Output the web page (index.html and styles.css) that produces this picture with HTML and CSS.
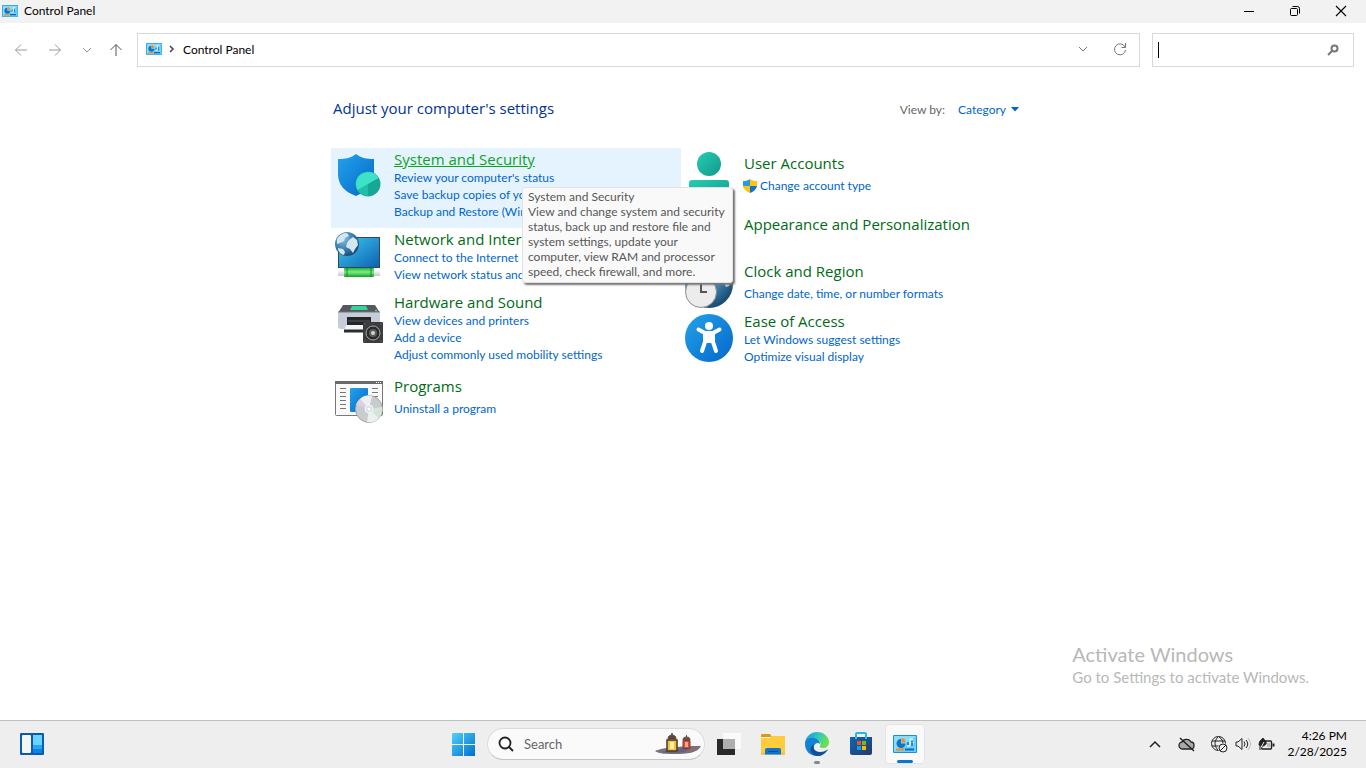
FILE: index.html
```
<!DOCTYPE html>
<html lang="en">
<head>
  <meta charset="UTF-8">
  <title>Control Panel</title>
  <link rel="stylesheet" href="styles.css">
</head>
<body>
  <svg class="defs" aria-hidden="true">
    <defs>
      <linearGradient id="blue" x1="0" y1="0" x2="1" y2="1">
        <stop offset="0" stop-color="#23a3e8"/><stop offset="1" stop-color="#0467cc"/>
      </linearGradient>
      <linearGradient id="teal" x1="0" y1="0" x2="1" y2="1">
        <stop offset="0" stop-color="#27cdb4"/><stop offset="1" stop-color="#11998a"/>
      </linearGradient>
      <linearGradient id="screen" x1="0" y1="0" x2="1" y2="1">
        <stop offset="0" stop-color="#40c8ef"/><stop offset="1" stop-color="#0b63b4"/>
      </linearGradient>
      <linearGradient id="cable" x1="0" y1="0" x2="0" y2="1">
        <stop offset="0" stop-color="#20b03a"/><stop offset="0.45" stop-color="#7dee7f"/><stop offset="1" stop-color="#149c30"/>
      </linearGradient>
      <linearGradient id="white" x1="0" y1="0" x2="0" y2="1">
        <stop offset="0" stop-color="#ffffff"/><stop offset="1" stop-color="#c4c8cc"/>
      </linearGradient>
      <radialGradient id="globe" cx="0.35" cy="0.3" r="0.8">
        <stop offset="0" stop-color="#8dbcdc"/><stop offset="0.5" stop-color="#3c83b3"/><stop offset="1" stop-color="#123f61"/>
      </radialGradient>
      <linearGradient id="win" x1="0" y1="0" x2="1" y2="1">
        <stop offset="0" stop-color="#4fd0fb"/><stop offset="1" stop-color="#0070ce"/>
      </linearGradient>
      <linearGradient id="edge-top" x1="0" y1="0" x2="1" y2="0.4">
        <stop offset="0.2" stop-color="#1fa5df"/><stop offset="0.6" stop-color="#35cbb6"/><stop offset="1" stop-color="#6be04c"/>
      </linearGradient>
      <linearGradient id="bag" x1="0" y1="0" x2="1" y2="1">
        <stop offset="0" stop-color="#0f66b5"/><stop offset="1" stop-color="#243a66"/>
      </linearGradient>
    </defs>
    <symbol id="cpanel" viewBox="0 0 24 18">
      <rect width="24" height="18" rx="1" fill="#1b8fdc"/>
      <rect x="1" y="1" width="22" height="16" fill="#8adcfb"/>
      <path d="M1 17 23 1v16z" fill="#6ccff8"/>
      <path d="M8 4a4.500 4.500 0 1 0 4.500 4.500H8z" fill="#1274c4"/>
      <path d="M8.500 3A4.500 4.500 0 0 1 12.500 7.500h-4z" fill="#f78d1e"/>
      <path d="M14 11h3V4h3M17 7.500h4" fill="none" stroke="#fff"/>
      <path d="M15 7v3M19 6v5" stroke="#1274c4" stroke-width="1.500"/>
      <path d="M3 14.500h8" stroke="#f78d1e" stroke-width="2"/>
      <path d="M12 14.500h9" stroke="#0d69b8" stroke-width="2"/>
    </symbol>
  </svg>

  <header class="titlebar">
    <svg class="cp-small" viewBox="0 0 24 18"><use href="#cpanel"/></svg>
    <span class="window-title">Control Panel</span>
    <div class="window-buttons">
      <button aria-label="Minimize"><svg width="12" height="12"><path d="M1 6.500h10" stroke="#000"/></svg></button>
      <button aria-label="Restore"><svg width="12" height="12" fill="none" stroke="#000"><rect x="1.500" y="3.500" width="7" height="7" rx="1"/><path d="M3.500 1.500h5a2 2 0 0 1 2 2v5"/></svg></button>
      <button aria-label="Close"><svg width="12" height="12"><path d="M1 1l10 10M11 1 1 11" stroke="#000" stroke-width="1.100"/></svg></button>
    </div>
  </header>

  <div class="navbar">
    <div class="nav-buttons">
      <button aria-label="Back"><svg width="14" height="14"><path d="M13 7H1.500M7 1.500 1.500 7 7 12.500"/></svg></button>
      <button aria-label="Forward"><svg width="14" height="14"><path d="M1 7h11.500M7 1.500 12.500 7 7 12.500"/></svg></button>
      <button class="recent" aria-label="Recent locations"><svg width="10" height="10"><path d="M1 3l4 4 4-4"/></svg></button>
      <button class="up" aria-label="Up"><svg width="14" height="14"><path d="M7 13V1.500M1.500 7 7 1.500 12.500 7"/></svg></button>
    </div>
    <nav class="address">
      <svg class="cp-small" viewBox="0 0 24 18"><use href="#cpanel"/></svg>
      <svg class="crumb" width="6" height="8"><path d="M1 1l3 3-3 3" fill="none" stroke="#444" stroke-width="1.500"/></svg>
      <a href="#">Control Panel</a>
      <button class="history" aria-label="Previous locations"><svg width="10" height="10"><path d="M1 3l4 4 4-4"/></svg></button>
      <button aria-label="Refresh"><svg width="14" height="14"><path d="M12 5A5.500 5.500 0 1 0 12.500 8M12.500 1v4.500H8.500"/></svg></button>
    </nav>
    <form class="search">
      <span class="caret"></span>
      <input type="text" aria-label="Search Control Panel">
      <svg width="12" height="12" fill="none" stroke="#777"><circle cx="7.500" cy="4.500" r="3" stroke-width="2"/><path d="M5 7 1 11" stroke-width="2"/></svg>
    </form>
  </div>

  <main>
    <div class="panel">
      <div class="panel-head">
        <h1>Adjust your computer's settings</h1>
        <label for="view">View by:</label>
        <select id="view"><option>Category</option></select>
        <svg width="8" height="5"><path d="M0 0h8L4 4.500z" fill="#0066cc"/></svg>
      </div>

      <div class="columns">
        <div class="column">
          <section class="category hover">
            <svg class="icon" viewBox="0 0 48 48">
              <path d="M21 2c5 4 10 5 18 5v15c0 11-8 18-18 22C10 40 3 33 3 22V7c8 0 13-1 18-5z" fill="url(#blue)"/>
              <circle cx="33" cy="32" r="12.500" fill="#16a796"/>
              <path d="M33 32V44A12 12 0 0 1 22.500 38z" fill="#1fbfa9"/>
              <path d="M33 32 22.500 38A12 12 0 1 1 43.500 26z" fill="#3ee2c8"/>
            </svg>
            <div class="links">
              <h2><a href="#">System and Security</a></h2>
              <a href="#">Review your computer's status</a>
              <a href="#">Save backup copies of your files with File History</a>
              <a href="#">Backup and Restore (Windows 7)</a>
            </div>
            <div class="tooltip" role="tooltip">System and Security<br>View and change system and security<br>status, back up and restore file and<br>system settings, update your<br>computer, view RAM and processor<br>speed, check firewall, and more.</div>
          </section>

          <section class="category">
            <svg class="icon" viewBox="0 0 48 48">
              <rect x="3" y="5" width="42" height="31" fill="#30495a"/>
              <rect x="4" y="6" width="40" height="29" fill="url(#screen)"/>
              <rect x="3" y="38" width="42" height="6" fill="url(#white)"/>
              <rect x="9" y="36" width="30" height="9" rx="1" fill="url(#cable)"/>
              <path d="M12 36v9M36 36v9" stroke="#138d2c"/>
              <circle cx="12" cy="12" r="12" fill="url(#globe)"/>
              <path d="M2 7C5 2 9 1 12 1l2 3-4 2-1 3-4 2-3 1zM14 8l4-3 4 3 1 5-3 4-2 4-3-4-4-2 1-4zM3 16l5 1 2 3-1 3c-4-1-6-4-6-7z" fill="#d4e6ee"/>
            </svg>
            <div class="links">
              <h2><a href="#">Network and Internet</a></h2>
              <a href="#">Connect to the Internet</a>
              <a href="#">View network status and tasks</a>
            </div>
          </section>

          <section class="category">
            <svg class="icon" viewBox="0 0 48 48">
              <path d="M8 10h32l5 8H3z" fill="#55595d"/>
              <path d="M17 11h14l2 4H15z" fill="#31d39e"/>
              <path d="M3 17h42v14a3 3 0 0 1-3 3H6a3 3 0 0 1-3-3z" fill="#c6cdd8"/>
              <path d="M3 17h42" stroke="#747980"/>
              <rect x="12" y="22" width="24" height="8" fill="#24272a"/>
              <path d="M13 26h22" stroke="#54585c"/>
              <path d="M11 30h26v6H9z" fill="#f4f5f6"/>
              <path d="M9 36h20" stroke="#2b2d2f" stroke-width="3"/>
              <circle cx="41" cy="15.500" r="1" fill="#45ed45"/>
              <rect x="28" y="27" width="20" height="21" rx="1" fill="#3b3c3e"/>
              <circle cx="38" cy="38" r="7" fill="#292a2b" stroke="#a5a7a9"/>
              <circle cx="38" cy="38" r="4" fill="#5c5e60"/>
              <circle cx="38" cy="38" r="2" fill="#d1d3d5"/>
              <g fill="#97999b"><circle cx="30" cy="29" r="0.500"/><circle cx="46" cy="29" r="0.500"/><circle cx="30" cy="46" r="0.500"/><circle cx="46" cy="46" r="0.500"/></g>
            </svg>
            <div class="links">
              <h2><a href="#">Hardware and Sound</a></h2>
              <a href="#">View devices and printers</a>
              <a href="#">Add a device</a>
              <a href="#">Adjust commonly used mobility settings</a>
            </div>
          </section>

          <section class="category single">
            <svg class="icon" viewBox="0 0 48 48">
              <rect x="0.500" y="6.500" width="47" height="34" rx="1" fill="#fafafa" stroke="#777"/>
              <path d="M0 7.500h48" stroke="#6a6a6a" stroke-width="3"/>
              <path d="M41 7.500h1m1 0h1m1 0h1" stroke="#fff"/>
              <path d="M5 13.500h6M5 17.500h6M5 21.500h6M5 25.500h6M5 29.500h6M5 33.500h6M37 13.500h6M37 17.500h6M37 21.500h6" stroke="#777"/>
              <rect x="15" y="13" width="18" height="24" rx="1" fill="url(#blue)"/>
              <circle cx="34" cy="34" r="13.500" fill="#c9cccf" stroke="#a3a5a8"/>
              <path d="M34 34 25 24a13 13 0 0 1 12-3zM34 34l10 9a13 13 0 0 1-12 4z" fill="#edf0f2"/>
              <path d="m34 34-13-4a13 13 0 0 1 4-6z" fill="#e0cfe3"/>
              <path d="m34 34 13-2a13 13 0 0 1-3 11z" fill="#d6e5d9"/>
              <circle cx="34" cy="34" r="4" fill="#dde0e2" stroke="#f8f8f8"/>
              <circle cx="34" cy="34" r="1.500" fill="#fff"/>
            </svg>
            <div class="links">
              <h2><a href="#">Programs</a></h2>
              <a href="#">Uninstall a program</a>
            </div>
          </section>
        </div>

        <div class="column compact">
          <section class="category single">
            <svg class="icon" viewBox="0 0 48 48">
              <circle cx="24" cy="12" r="12" fill="url(#teal)"/>
              <path d="M4 48V31a3 3 0 0 1 3-3h34a3 3 0 0 1 3 3v17z" fill="url(#teal)"/>
            </svg>
            <div class="links">
              <h2><a href="#">User Accounts</a></h2>
              <a class="with-shield" href="#"><svg width="14" height="14" viewBox="0 0 14 14"><path d="M7 0c2 1.500 4 2 7 2v5H7z" fill="#fdc413"/><path d="M7 0C5 1.500 3 2 0 2v5h7z" fill="#2a9ae0"/><path d="M0 7h7v7C3 12.500 0.500 10 0 7z" fill="#fdc413"/><path d="M14 7H7v7c4-1.500 6.500-4 7-7z" fill="#1272c8"/></svg>Change account type</a>
            </div>
          </section>

          <section class="category title-only">
            <svg class="icon" viewBox="0 0 48 48">
              <rect x="0.500" y="3.500" width="47" height="16" fill="url(#screen)" stroke="#444"/>
            </svg>
            <div class="links">
              <h2><a href="#">Appearance and Personalization</a></h2>
            </div>
          </section>

          <section class="category single">
            <svg class="icon" viewBox="0 0 48 48">
              <circle cx="24" cy="24" r="24" fill="url(#globe)"/>
              <path d="m37 19 4 3 5-2-2 6-3 1z" fill="#c7dfe7"/>
              <circle cx="16" cy="32" r="15.500" fill="#ececec" stroke="#8c8c8c"/>
              <path d="M16 20v12h6" fill="none" stroke="#555" stroke-width="2"/>
            </svg>
            <div class="links">
              <h2><a href="#">Clock and Region</a></h2>
              <a href="#">Change date, time, or number formats</a>
            </div>
          </section>

          <section class="category">
            <svg class="icon" viewBox="0 0 48 48">
              <circle cx="24" cy="24" r="24" fill="url(#blue)"/>
              <circle cx="24" cy="12" r="4" fill="#fff"/>
              <path d="M13.500 15.500 20 19h8l6.500-3.500M20 20v8l-3 9M28 20v8l3 9" fill="none" stroke="#fff" stroke-width="4" stroke-linecap="round" stroke-linejoin="round"/>
              <path d="M18 18h12v12l-3-1h-6l-3 1z" fill="#fff"/>
            </svg>
            <div class="links">
              <h2><a href="#">Ease of Access</a></h2>
              <a href="#">Let Windows suggest settings</a>
              <a href="#">Optimize visual display</a>
            </div>
          </section>
        </div>
      </div>
    </div>

    <div class="watermark">
      <p class="big">Activate Windows</p>
      <p>Go to Settings to activate Windows.</p>
    </div>
  </main>

  <footer class="taskbar">
    <div class="widgets">
      <button aria-label="Widgets">
        <svg width="24" height="22"><rect width="24" height="22" rx="1" fill="#0b5cad"/><rect x="2" y="2" width="9" height="18" rx="1" fill="#f5f5f5"/><path d="M13 2h9v10h-9z" fill="#67d5ff"/><path d="M13 12h9v4h-9z" fill="#27a6f4"/><path d="M13 16h9v4h-9z" fill="#0c83e6"/></svg>
      </button>
    </div>

    <div class="apps">
      <button aria-label="Start">
        <svg width="23" height="23"><path d="M1 0h10v11H0V1zM12 0h11v11H12zM0 12h11v11H0zM12 12h11v11H12z" fill="url(#win)"/></svg>
      </button>
      <div class="task-search">
        <svg width="16" height="16" fill="none" stroke="#222" stroke-width="1.800"><circle cx="7" cy="7" r="5.500"/><path d="m11 11 4 4"/></svg>
        <input type="text" placeholder="Search" aria-label="Search">
        <svg width="46" height="24" viewBox="0 0 46 24">
          <path d="M0 19c8-4 32-5 46-5-3 7-14 8-26 8-8 0-16 0-20-3z" fill="#77727c"/>
          <path d="M7 20c9-4 22-4 30-3-7 4-22 5-30 3z" fill="#65627f"/>
          <path d="M31 19c5-3 9-4 14-4-3 4-8 5-14 4z" fill="#8d6c70"/>
          <path d="M16 2h2M17 1v2M13 7c0-3 2-4 4-4s4 1 4 4z" fill="#5b4438" stroke="#5b4438"/>
          <path d="M12 8h10v11H12z" fill="#f2c23a" stroke="#4c382d" stroke-width="1.500"/>
          <path d="M15 10h4v7h-4z" fill="#fff1a0"/>
          <path d="M31.500 3v2M28 8c0-2 1-3 3.500-3S35 6 35 8z" fill="#6b5044" stroke="#6b5044"/>
          <path d="M28 8.500h7v8h-7z" fill="#d94b3a" stroke="#6b4437"/>
          <path d="M30 10h3v5h-3z" fill="#f7a48b"/>
        </svg>
      </div>
      <button aria-label="Task view">
        <svg width="24" height="22"><rect y="6" width="18" height="16" fill="#292929"/><rect x="6" width="18" height="16" fill="#fafafa"/><rect x="6" y="6" width="12" height="10" fill="#aeaeae"/></svg>
      </button>
      <button aria-label="File Explorer">
        <svg width="24" height="22"><path d="M0 2a1 1 0 0 1 1-1h8l2 3H0z" fill="#dc9b09"/><path d="M0 5h9l2-2h13v18H0z" fill="#ffcc3d"/><path d="M0 21h24" stroke="#e6a51a"/><path d="M4 21.500V17a2 2 0 0 1 2-2h12a2 2 0 0 1 2 2v4.500z" fill="#0f75c8"/><path d="M7 18.500h10" stroke="#0b4e90"/></svg>
      </button>
      <button class="running" aria-label="Microsoft Edge">
        <svg width="24" height="24" viewBox="0 0 24 24">
          <path d="M0 11C1 4 6 0 12 0c7 0 12 5 12 10 0 4-3 6-6 6-2 0-4-1-3-2 2-3-1-7-6-7-4 0-7 2-9 4z" fill="url(#edge-top)"/>
          <path d="M0 12c0-5 5-7 9-6 4 1 6 3 6 6-2-2-5-1-6 2-1 5 3 9 8 9-1 1-3 1-5 1C5 24 0 19 0 12z" fill="#1282d5"/>
          <path d="M9 12c-2 4 1 8 6 8 3 0 5-1 7-2 1-1 1 0 0 1-2 3-6 5-10 5-7-1-9-8-3-12z" fill="#114f99"/>
        </svg>
      </button>
      <button aria-label="Microsoft Store">
        <svg width="24" height="24"><path d="M7 7V2a1 1 0 0 1 1-1h8a1 1 0 0 1 1 1v5" fill="none" stroke="#28b5e9" stroke-width="2"/><path d="M1 5h22v16a2 2 0 0 1-2 2H3a2 2 0 0 1-2-2z" fill="url(#bag)"/><path d="M7 5v2M17 5v2" stroke="#2cc2f4" stroke-width="2"/><path d="M8 9h4v4H8z" fill="#f25022"/><path d="M13 9h4v4h-4z" fill="#7fba00"/><path d="M8 14h4v4H8z" fill="#00a4ef"/><path d="M13 14h4v4h-4z" fill="#ffb900"/></svg>
      </button>
      <button class="running active" aria-label="Control Panel">
        <svg width="24" height="18" viewBox="0 0 24 18"><use href="#cpanel"/></svg>
      </button>
    </div>

    <div class="tray">
      <button aria-label="Show hidden icons"><svg width="12" height="8" fill="none" stroke="#222" stroke-width="1.500"><path d="m1 7 5-5 5 5"/></svg></button>
      <button class="cloud" aria-label="OneDrive"><svg width="18" height="16" fill="none" stroke="#222"><path d="M5 13a3.500 3.500 0 0 1-1-7c1-3 7-4 9 0 4 0 4 7 0 7z" fill="#aaa" stroke-width="1.300"/><path d="m2 2 14 13" stroke-width="1.500"/></svg></button>
      <button class="status" aria-label="Network, volume and battery">
        <svg width="18" height="18" fill="none" stroke="#222"><circle cx="8.500" cy="8.500" r="7"/><path d="M8 2C4 6 4 11 8 15M9 2c3 2 4 4 4 7M2 6h13M2 11h7"/><circle cx="13" cy="13" r="5" fill="#eee" stroke="none"/><circle cx="13" cy="13" r="4"/><path d="m10 16 6-6"/></svg>
        <svg width="16" height="14" fill="none" stroke="#222"><path d="M1 5h2l4-3.500v11L3 9H1z"/><path d="M9 4.500q2 2.500 0 5M11 3q3.500 4 0 8"/><path d="M13 1q5 6 0 12" stroke="#bbb"/></svg>
        <svg width="17" height="14" fill="none" stroke="#222"><rect x="3.500" y="4" width="10" height="8" rx="1" stroke-width="1.400"/><path d="M9 6v4h3V6z" fill="#bbb" stroke="none"/><path d="M15.500 6.500v3" stroke-width="2"/><path d="M1 8c0-4 2-5 4-7 1 2 4 3 3 6-1 2-5 3-7 1z" fill="#222"/><path d="M2 12 6 5" stroke="#eee"/><path d="M2 13V9"/></svg>
      </button>
      <button class="clock">4:26 PM<br>2/28/2025</button>
    </div>
  </footer>
</body>
</html>
```
FILE: styles.css
```
* {
  box-sizing: border-box;
}
body {
  margin: 0;
  height: 100vh;
  display: flex;
  flex-direction: column;
  overflow: hidden;
  background: #fff;
  color: #000;
  font-family: "Segoe UI", Lato, sans-serif;
  font-size: 12px;
}
h1, h2, p {
  margin: 0;
  font-weight: normal;
}
a {
  color: #0066cc;
  text-decoration: none;
}
button {
  display: flex;
  align-items: center;
  justify-content: center;
  padding: 0;
  border: none;
  background: none;
  font: inherit;
  color: inherit;
}
input, select {
  border: none;
  outline: none;
  padding: 0;
  background: none;
  font: inherit;
  min-width: 0;
}
svg {
  flex-shrink: 0;
}
.defs {
  position: absolute;
  width: 0;
  height: 0;
}
.cp-small {
  width: 16px;
  height: 12px;
}

/* title bar */
.titlebar {
  display: flex;
  align-items: center;
  height: 23px;
  padding: 0 2px 2px;
  gap: 6px;
  background: #f2f2f2;
}
.window-buttons {
  display: flex;
  margin-left: auto;
}
.window-buttons button {
  width: 46px;
  height: 21px;
}

/* navigation */
.navbar {
  display: flex;
  align-items: center;
  gap: 12px;
  padding: 10px 12px 10px 14px;
}
.nav-buttons {
  display: flex;
  align-items: center;
  gap: 20px;
  width: 111px;
}
.nav-buttons button, .address button {
  color: #999;
}
.nav-buttons svg, .address button svg {
  fill: none;
  stroke: currentColor;
}
.nav-buttons .up {
  color: #555;
  margin-left: -3px;
}
.address {
  display: flex;
  align-items: center;
  flex: 1;
  height: 34px;
  padding: 0 12px 2px 8px;
  border: 1px solid #d9d9d9;
}
.address a {
  color: #000;
}
.crumb {
  margin: 0 8px 0 7px;
}
.address .history {
  margin: 0 25px 0 auto;
}
.address button {
  color: #777;
}
.search {
  display: flex;
  align-items: center;
  width: 202px;
  height: 34px;
  padding: 0 14px 0 5px;
  border: 1px solid #d9d9d9;
}
.search input {
  flex: 1;
}
.caret {
  width: 1px;
  height: 16px;
  background: #000;
}

/* content */
main {
  flex: 1;
  position: relative;
}
.panel {
  width: 704px;
  margin: 0 auto;
  padding-top: 20px;
}
.panel-head {
  display: flex;
  align-items: center;
  height: 24px;
  padding: 0 16px 0 2px;
  color: #666;
}
.panel-head h1 {
  margin-right: auto;
  padding-bottom: 2px;
  font-family: "Open Sans", sans-serif;
  font-size: 15px;
  line-height: 20px;
  color: #003399;
}
.panel-head select {
  margin: 0 4px 0 13px;
  appearance: none;
  color: #0066cc;
}
.columns {
  display: grid;
  grid-template-columns: 350px 350px;
  align-items: start;
  margin-top: 27px;
}
.category {
  display: flex;
  gap: 11px;
  padding: 1px 4px 8px;
  position: relative;
}
.category.hover {
  background: #e5f3ff;
  z-index: 1;
}
.icon {
  width: 48px;
  height: 48px;
  margin-top: 3px;
}
.links {
  display: flex;
  flex-direction: column;
  align-items: flex-start;
  line-height: 17px;
  white-space: nowrap;
}
.links h2 {
  font-family: "Open Sans", sans-serif;
  font-size: 15px;
  line-height: 20px;
}
.links h2 a {
  color: #006b16;
}
.hover h2 a {
  color: #0ba51e;
  text-decoration: underline;
}
.single .links {
  padding-top: 4px;
  gap: 4px;
}
.title-only .links {
  padding-top: 11px;
}
.compact .category {
  padding-bottom: 2px;
  height: 54px;
}
.with-shield {
  display: flex;
  align-items: center;
  gap: 3px;
  margin-left: -1px;
}
.tooltip {
  position: absolute;
  left: 191px;
  top: 39px;
  padding: 1px 7px 3px 5px;
  border: 1px solid #e2e2e2;
  border-radius: 3px;
  background: #f9f9f9;
  box-shadow: 2px 2px 2px #777;
  color: #575757;
  line-height: 15px;
  white-space: nowrap;
}
.watermark {
  position: absolute;
  right: 57px;
  bottom: 33px;
  color: #b8b8b8;
  font-size: 15px;
  line-height: 20px;
}
.watermark .big {
  font-size: 20px;
  line-height: 26px;
}

/* taskbar */
.taskbar {
  display: grid;
  grid-template-columns: 1fr auto 1fr;
  align-items: center;
  height: 48px;
  padding-bottom: 1px;
  border-top: 1px solid #bfbfbf;
  background: #eee;
}
.widgets {
  padding-left: 20px;
}
.apps {
  display: flex;
  align-items: center;
  gap: 4px;
  padding-left: 2px;
}
.apps button {
  position: relative;
  width: 40px;
  height: 40px;
}
.apps .active {
  border: 1px solid #e4e4e4;
  border-radius: 4px;
  background: #f9f9f9;
}
.running::after {
  content: "";
  position: absolute;
  bottom: 0;
  width: 6px;
  height: 3px;
  border-radius: 2px;
  background: #888;
}
.active::after {
  width: 16px;
  background: #0078d4;
}
.task-search {
  display: flex;
  align-items: center;
  gap: 10px;
  width: 218px;
  height: 32px;
  padding: 0 3px 0 10px;
  border: 1px solid #dcdcdc;
  border-bottom-color: #c4c4c4;
  border-radius: 16px;
  background: #fafafa;
}
.task-search input {
  flex: 1;
  font-size: 13px;
}
.task-search input::placeholder {
  color: #666;
  opacity: 1;
}
.tray {
  display: flex;
  align-items: center;
  justify-content: flex-end;
  padding-right: 19px;
}
.cloud {
  margin: 0 14px 0 17px;
}
.status {
  gap: 7px;
}
.clock {
  margin-left: 12px;
  line-height: 16px;
  text-align: right;
}
```
